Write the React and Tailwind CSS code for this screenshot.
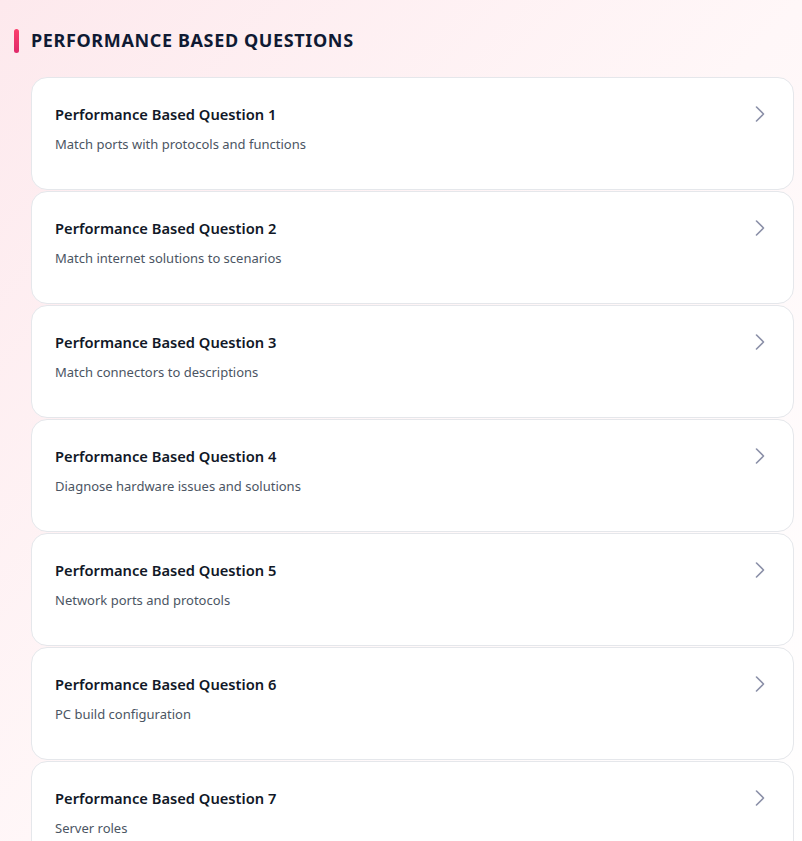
import { ChevronRight } from "lucide-react"

const questions = [
  { id: 1, desc: "Match ports with protocols and functions" },
  { id: 2, desc: "Match internet solutions to scenarios" },
  { id: 3, desc: "Match connectors to descriptions" },
  { id: 4, desc: "Diagnose hardware issues and solutions" },
  { id: 5, desc: "Network ports and protocols" },
  { id: 6, desc: "PC build configuration" },
  { id: 7, desc: "Server roles" },
]

function QuestionCard({ id, desc }) {
  return (
    <button className="w-full h-[113px] bg-white border border-[#e5e7eb] rounded-2xl pl-[23px] pr-[19px] pt-[25px] flex items-start justify-between text-left">
      <div>
        <div className="text-[14.7px] leading-[22px] font-semibold text-[#111827]">
          Performance Based Question {id}
        </div>
        <div className="mt-[9px] text-[13px] leading-[20px] text-[#4b5563]">{desc}</div>
      </div>
      <ChevronRight className="w-7 h-7 text-[#8b90a8] -mt-[3px]" strokeWidth={1.4} />
    </button>
  )
}

export default function App() {
  return (
    <div
      className="min-h-[841px] w-full bg-gradient-to-br from-[#fde9ed] via-[#fff7f8] to-white overflow-hidden"
      style={{ fontFamily: '"Noto Sans", "Open Sans", sans-serif' }}
    >
      <div className="flex items-center gap-3 pl-[14px] pt-[27px]">
        <div className="w-[5px] h-6 rounded-full bg-gradient-to-b from-[#fb3f6c] to-[#e0296a]" />
        <h2 className="text-[18px] font-bold tracking-[0.035em] text-[#0f1a33]">PERFORMANCE BASED QUESTIONS</h2>
      </div>
      <div className="mt-[23px] ml-[31px] mr-[8px] flex flex-col gap-px">
        {questions.map(q => (
          <QuestionCard key={q.id} {...q} />
        ))}
      </div>
    </div>
  )
}
